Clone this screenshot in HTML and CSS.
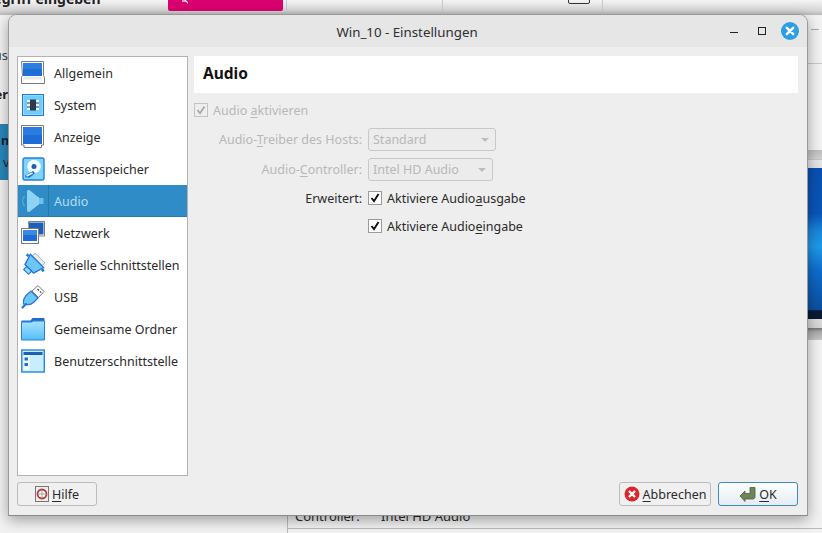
FILE: index.html
```html
<!DOCTYPE html>
<html lang="de">
<head>
<meta charset="utf-8">
<title>Win_10 - Einstellungen</title>
<link rel="stylesheet" href="styles.css">
</head>
<body>
<div class="desktop">
  <div class="bg-top"></div>
  <div class="bg-heading">Begriff eingeben</div>
  <div class="bg-pink"><svg width="20" height="5" viewBox="0 0 20 5"><path d="M17 0l4 4" stroke="#fff" stroke-width="1.200" fill="none"/><path d="M14 1h4" stroke="#fff" stroke-width="1.200" fill="none"/></svg></div>
  <div class="bg-vline l1"></div>
  <div class="bg-vline l2"></div>
  <div class="bg-vline l3"></div>
  <div class="bg-kbd"></div>
  <div class="bg-frag us">us</div>
  <div class="bg-frag er">er</div>
  <div class="bg-blue"><span class="bg-n">n</span><span class="bg-v">v</span></div>
  <div class="bg-dash"></div>
  <div class="bg-rline"></div>
  <div class="bg-shade-a"></div>
  <div class="bg-preview"></div>
  <div class="bg-shade-b"></div>
  <div class="bg-bottom"><span class="bg-c1">Controller:</span><span class="bg-c2">Intel HD Audio</span></div>

  <div class="dialog">
    <header class="titlebar">
      <span class="title">Win_10 - Einstellungen</span>
      <span class="wm wm-min"></span>
      <span class="wm wm-max"></span>
      <span class="wm wm-close"><svg width="18" height="18" viewBox="0 0 18 18"><circle cx="9" cy="9" r="9" fill="#2a9fe2"/><path d="M5.800 5.800l6.400 6.400M12.200 5.800l-6.400 6.400" stroke="#fff" stroke-width="2.400" stroke-linecap="round"/></svg></span>
    </header>
    <div class="body">
      <div class="main">
        <nav class="list">
          <div class="item"><svg class="ic" viewBox="0 0 24 24"><path d="M.5.500h22v14l1 2v6H.5v-6l1-2z" fill="#fff" stroke="#7b7b7b"/><rect x="2" y="2" width="19" height="13" fill="#1e6cd6"/><rect x="2" y="2" width="19" height="6" fill="#2a7fe0"/><path d="M3 16h17l1.500 2.500h-20z" fill="#e8e8e8"/></svg><span>Allgemein</span></div>
          <div class="item"><svg class="ic" viewBox="0 0 24 24"><rect x="1.500" y="1.500" width="21" height="21" fill="#8fdcff" stroke="#2a78d6"/><rect x="3" y="3" width="18" height="18" fill="#6fcdfb"/><rect x="6" y="7" width="12" height="10" fill="#e8f4fb"/><rect x="9" y="6.500" width="6" height="11" fill="#2b3a4d"/><path d="M6 10h3M6 14h3M15 10h3M15 14h3" stroke="#2b3a4d"/></svg><span>System</span></div>
          <div class="item"><svg class="ic" viewBox="0 0 24 24"><path d="M.5.500h22v19.500h-2v2.500H3V20H.5z" fill="#fff" stroke="#7b7b7b"/><rect x="2" y="2" width="19" height="17" fill="#1e6cd6"/><rect x="2" y="2" width="19" height="8" fill="#2a7de0"/></svg><span>Anzeige</span></div>
          <div class="item"><svg class="ic" viewBox="0 0 24 24"><rect x="2" y="1" width="21" height="22" rx="2" fill="#7fd4fb" stroke="#2480d8" stroke-width="1.400"/><circle cx="13" cy="9.500" r="6.800" fill="#f2fbff"/><circle cx="13" cy="9.500" r="2.500" fill="#1c5fae"/><path d="M4 18.500l8-4.500 2 2-5 4.500H4.500z" fill="#1c6cc4"/><path d="M5.500 19l6-3" stroke="#f2fbff" stroke-width="1.500"/></svg><span>Massenspeicher</span></div>
          <div class="item selected"><span class="sel-icon"><svg class="ic" viewBox="0 0 24 24"><path d="M3.500 7a8 8 0 0 0 0 10" fill="none" stroke="#5aaede" stroke-width="1.200"/><path d="M6 3c0-2 1.500-2.500 3-1.500L17 8h1v8h-1l-8 6.500c-1.500 1-3 .5-3-1.500z" fill="#8ed2f5"/><path d="M18 9h4.500v6H18z" fill="#6fc0ec"/></svg></span><span class="sel-label">Audio</span></div>
          <div class="item"><svg class="ic" viewBox="0 0 24 24"><path d="M7.500.500h16v14.500h-7V8.500h-8.500z" fill="#fff" stroke="#7b7b7b"/><rect x="8" y="1.500" width="14.500" height="12" fill="#1c5fb8"/><rect x=".5" y="7.500" width="17" height="15" fill="#fff" stroke="#7b7b7b"/><rect x="2" y="9" width="14" height="11" fill="#1e6cd6"/><rect x="2" y="9" width="14" height="5" fill="#3a8ae4"/></svg><span>Netzwerk</span></div>
          <div class="item"><svg class="ic" viewBox="0 0 24 24"><g transform="translate(11.500 12.500) rotate(45) scale(.86) translate(-12 -10)"><rect x="4" y="-2.500" width="16" height="5" fill="#ececec" stroke="#7fa6c8" stroke-width=".9"/><path d="M1 2.500h22l-4 13H5z" fill="#6cc6f8" stroke="#2478d4" stroke-width="1.600" stroke-linejoin="round"/><path d="M-2 5.500h3M23 5.500h3" stroke="#2478d4" stroke-width="3"/><rect x="8" y="15.500" width="8" height="5" fill="#8ed8fb" stroke="#2478d4" stroke-width="1.300"/></g></svg><span>Serielle Schnittstellen</span></div>
          <div class="item"><svg class="ic" viewBox="0 0 24 24"><path d="M2.500 19c-.5-3.500 1-7 3.500-9.500l4-3.500 7 7-4 4c-2.500 2.500-6 3-8.500 2.500z" fill="#6cc6f8" stroke="#2478d4" stroke-width="1.200"/><path d="M5 19l-3.500 3.500" stroke="#2478d4" stroke-width="2.200" stroke-linecap="round"/><path d="M11 6l6-5.500 6 6-5.500 6z" fill="#fff" stroke="#6f7a85"/><path d="M16.500 4l1.500 1.500M19 6.500l1.200 1.200" stroke="#444" stroke-width="1.200"/></svg><span>USB</span></div>
          <div class="item"><svg class="ic" viewBox="0 0 24 24"><defs><linearGradient id="fold" x1="0" y1="0" x2="0" y2="1"><stop offset="0" stop-color="#a7e4ff"/><stop offset="1" stop-color="#56bdf6"/></linearGradient></defs><path d="M.5 22.500V3.500h9l2-2.500h12v21.500z" fill="#1e6cd0"/><path d="M.5 23V5h10l2-1h11v19z" fill="url(#fold)" stroke="#2a80d8"/></svg><span>Gemeinsame Ordner</span></div>
          <div class="item"><svg class="ic" viewBox="0 0 24 24"><rect x=".8" y="1" width="22.500" height="22" fill="#c8edff" stroke="#2a85d8" stroke-width="1.400"/><rect x="2.500" y="3" width="19" height="3" fill="#1c5fb0"/><rect x="2.500" y="6" width="6" height="15" fill="#eef9ff"/><rect x="3.500" y="8.500" width="3.500" height="3" fill="#1e6cd0"/><rect x="3.500" y="14" width="3.500" height="3" fill="#1e6cd0"/></svg><span>Benutzerschnittstelle</span></div>
        </nav>
        <section class="page">
          <h1 class="page-title">Audio</h1>
          <label class="enable off"><span class="check off-check"><svg width="14" height="14" viewBox="0 0 14 14"><path d="M3.500 7l2.500 3.200L10.500 3.500" fill="none" stroke="#a8a8a8" stroke-width="1.800"/></svg></span><span>Audio <u>a</u>ktivieren</span></label>
          <div class="form">
            <span class="lab off">Audio-<u>T</u>reiber des Hosts:</span>
            <span class="combo wide">Standard<i class="arrow"></i></span>
            <span class="lab off">Audio-<u>C</u>ontroller:</span>
            <span class="combo">Intel HD Audio<i class="arrow"></i></span>
            <span class="lab">Erweitert:</span>
            <label class="opt"><span class="check"><svg width="14" height="14" viewBox="0 0 14 14"><path d="M3.500 7l2.500 3.200L10.500 3" fill="none" stroke="#111" stroke-width="1.900"/></svg></span><span>Aktiviere Audio<u>a</u>usgabe</span></label>
            <span></span>
            <label class="opt"><span class="check"><svg width="14" height="14" viewBox="0 0 14 14"><path d="M3.500 7l2.500 3.200L10.500 3" fill="none" stroke="#111" stroke-width="1.900"/></svg></span><span>Aktiviere Audio<u>e</u>ingabe</span></label>
          </div>
        </section>
      </div>
      <footer class="buttons">
        <button class="btn help"><svg width="14" height="16" viewBox="0 0 14 16"><rect x=".5" y=".5" width="13" height="15" fill="#eee" stroke="#777"/><circle cx="7" cy="8" r="4.500" fill="#fff" stroke="#c03030" stroke-width="1.800"/><path d="M7 3.500v9M2.500 8h9" stroke="#999" stroke-width=".9"/></svg><span><u>H</u>ilfe</span></button>
        <span class="spacer"></span>
        <button class="btn cancel"><svg width="16" height="16" viewBox="0 0 16 16"><circle cx="8" cy="8" r="7.500" fill="#d8282e"/><path d="M5 5l6 6M11 5l-6 6" stroke="#fff" stroke-width="2.400"/></svg><span><u>A</u>bbrechen</span></button>
        <button class="btn ok"><svg width="17" height="16" viewBox="0 0 17 16"><path d="M1 10l5-5v2.500h5V1.500h5V11c0 1-1 2-2 2H6v2.500z" fill="#6f8458" stroke="#4c5c3c" stroke-width=".8" stroke-linejoin="round"/></svg><span><u>O</u>K</span></button>
      </footer>
    </div>
  </div>
</div>
</body>
</html>
```
FILE: styles.css
```css
* { box-sizing: border-box; }
html, body { margin: 0; padding: 0; }
body { font-family: "Noto Sans", "Open Sans", sans-serif; font-size: 12.5px; color: #2c2c2c; }
.desktop { position: relative; width: 822px; height: 533px; overflow: hidden; background: #f2f2f2; }

.bg-top { position: absolute; left: 0; top: 0; width: 822px; height: 15px; background: linear-gradient(#f4f4f4, #d6d6d6 70%, #b8b8b8); }
.bg-heading { position: absolute; left: -16px; top: -11px; font-weight: 700; font-size: 14px; color: #222; white-space: nowrap; }
.bg-pink { position: absolute; left: 168px; top: 0; width: 115px; height: 11px; background: #d9006f; border-radius: 0 0 2px 2px; overflow: hidden; }
.bg-pink svg { display: block; }
.bg-vline { position: absolute; top: 0; width: 1px; height: 11px; background: #c4cad8; }
.l1 { left: 286px; } .l2 { left: 442px; } .l3 { left: 602px; }
.bg-kbd { position: absolute; left: 568px; top: -6px; width: 22px; height: 10px; border: 1px solid #333; border-radius: 2px; }
.bg-frag { position: absolute; left: 0; font-size: 13px; line-height: 16px; color: #444; overflow: hidden; width: 8px; direction: rtl; }
.us { top: 47px; }
.er { top: 86px; font-weight: 700; color: #222; }
.bg-blue { position: absolute; left: 0; top: 124px; width: 8px; height: 56px; background: #2a86ba; }
.bg-n { position: absolute; left: 1px; top: 8px; font-weight: 700; color: #102030; }
.bg-v { position: absolute; left: 3px; top: 30px; color: #102030; }
.bg-dash { position: absolute; left: 811px; top: 29px; width: 8px; height: 1px; background: #aaa; }
.bg-rline { position: absolute; left: 807px; top: 63px; width: 15px; height: 1px; background: #c8c8c8; }
.bg-shade-a { position: absolute; left: 807px; top: 150px; width: 15px; height: 18px; background: linear-gradient(#bdbdbd, #cfcfcf 48%, #777 50%, #e6e6e6 54%, #e2e2e2); }
.bg-preview { position: absolute; left: 807px; top: 168px; width: 15px; height: 151px; background: linear-gradient(#0a4fb0 0, #0a55b8 30%, #1a86dc 42%, #1e9ae6 52%, #0f6ccc 68%, #0c4f9e 94%, #0a1a30 94.500%, #0a1a30 100%); }
.bg-shade-b { position: absolute; left: 807px; top: 319px; width: 15px; height: 21px; background: linear-gradient(#dcdcdc, #d4d4d4 42%, #777 44%, #a8a8a8 60%, #c6c6c6); }
.bg-bottom { position: absolute; left: 0; top: 515px; width: 822px; height: 18px; overflow: hidden; font-size: 13px; }
.bg-bottom::before { content: ""; position: absolute; left: 287px; top: 0; bottom: 0; width: 1px; background: #bbb; }
.bg-bottom::after { content: ""; position: absolute; left: 287px; right: 0; top: 13px; height: 1px; background: #bbb; }
.bg-c1 { position: absolute; left: 295px; top: -8px; }
.bg-c2 { position: absolute; left: 381px; top: -8px; }

.dialog { position: absolute; left: 8px; top: 14px; width: 800px; height: 502px; display: flex; flex-direction: column; background: #eee; border: 1px solid #999; border-bottom-color: #8a8a8a; border-radius: 9px 9px 0 0; box-shadow: 0 4px 14px rgba(0,0,0,.35); overflow: hidden; }
.titlebar { position: relative; flex: none; height: 32px; background: #e6e6e6; display: flex; align-items: center; justify-content: center; }
.title { font-size: 13.3px; color: #2e2e2e; position: relative; top: 1px; left: -1px; }
.wm { position: absolute; }
.wm-min { left: 721px; top: 17px; width: 8px; height: 1px; background: #222; }
.wm-max { left: 749px; top: 12px; width: 8px; height: 8px; border: 1px solid #222; }
.wm-close { left: 772px; top: 7px; width: 18px; height: 18px; }
.wm-close svg { display: block; }

.body { flex: 1; display: flex; flex-direction: column; padding: 9px 9px 9px 8px; min-height: 0; }
.main { flex: 1; display: flex; gap: 6px; min-height: 0; }
.list { flex: none; width: 171px; background: #fff; border: 1px solid #b2b2b2; }
.item { height: 32px; display: flex; align-items: center; gap: 9px; padding-left: 3px; white-space: nowrap; color: #2a2a2a; }
.ic { width: 24px; height: 24px; flex: none; display: block; }
.selected { background: #308cc6; color: #b6dcf4; padding-left: 0; gap: 0; box-shadow: inset 0 -1px 0 #2a7cb0; }
.sel-icon { width: 31px; height: 32px; display: flex; align-items: center; padding-left: 3px; border-right: 1px solid #2778ac; flex: none; }
.sel-label { padding-left: 5px; }

.page { flex: 1; min-width: 0; }
.page-title { margin: 0; height: 37px; background: #fff; padding-left: 9px; font-size: 15.5px; line-height: 35px; font-weight: 700; color: #111; }
.enable { display: flex; align-items: center; gap: 5px; margin-top: 9px; height: 16px; }
.off { color: #b8b8b8; }
.check { width: 14px; height: 14px; flex: none; background: #fff; border: 1px solid #9a9a9a; display: block; position: relative; }
.check svg { position: absolute; left: -1px; top: -1px; }
.off-check { background: #eee; border-color: #c4c4c4; }
.form { display: grid; grid-template-columns: 168px max-content; column-gap: 6px; margin-top: 6px; grid-template-rows: 30px 30px 28px 28px; align-items: center; justify-items: start; }
.lab { justify-self: end; white-space: nowrap; }
.combo { position: relative; width: 128px; height: 23px; border: 1px solid #c8c8c8; border-radius: 3px; background: #ececec; color: #b8b8b8; padding-left: 4px; line-height: 21px; }
.combo:not(.wide) { width: 125px; }
.arrow { position: absolute; right: 6px; top: 9px; width: 0; height: 0; border-left: 4px solid transparent; border-right: 4px solid transparent; border-top: 4px solid #bdbdbd; }
.opt { display: flex; align-items: center; gap: 5px; white-space: nowrap; color: #2a2a2a; }
u { text-underline-offset: 2px; text-decoration-thickness: 1px; }

.buttons { flex: none; display: flex; gap: 7px; margin-top: 6px; height: 24px; }
.spacer { flex: 1; }
.btn { height: 24px; display: flex; align-items: center; justify-content: center; gap: 3px; font: inherit; color: #2a2a2a; background: #f0f0f0; border: 1px solid #bcbcbc; border-radius: 3px; padding: 0; }
.btn svg { flex: none; display: block; }
.help { width: 80px; }
.cancel { width: 92px; }
.ok { width: 80px; background: linear-gradient(#fdfefe, #e4ecf2); border-color: #3f8ab8; }
```
